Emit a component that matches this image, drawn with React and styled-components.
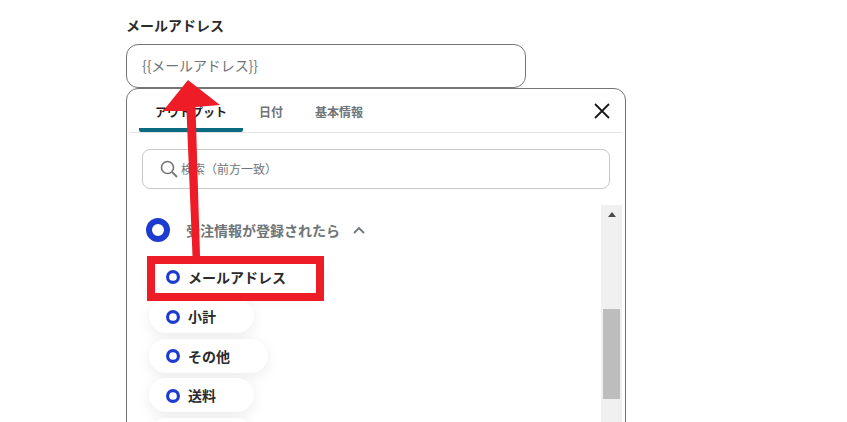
import styled, { createGlobalStyle } from "styled-components";

const GlobalStyle = createGlobalStyle`
  html, body {
    margin: 0;
    padding: 0;
    background: #ffffff;
    overflow: hidden;
  }
  * {
    box-sizing: border-box;
  }
`;

const FONT = `"Noto Sans CJK JP", "Noto Sans", sans-serif`;

const outputs = ["メールアドレス", "小計", "その他", "送料"];

function Ring({ size, stroke }) {
  return (
    <svg width={size} height={size} viewBox="0 0 24 24">
      <circle cx="12" cy="12" r={12 - stroke / 2} fill="none" stroke="#1e3bd0" strokeWidth={stroke} />
    </svg>
  );
}

function App() {
  return (
    <Page>
      <GlobalStyle />
      <Form>
        <Label>メールアドレス</Label>
        <Input>{"{{メールアドレス}}"}</Input>
        <Panel>
          <Tabs>
            <Tab $active>アウトプット</Tab>
            <Tab>日付</Tab>
            <Tab>基本情報</Tab>
            <Close>
              <svg width="16" height="16" viewBox="0 0 16 16">
                <path d="M1 1 L15 15 M15 1 L1 15" stroke="#1a1a1a" strokeWidth="1.8" fill="none" />
              </svg>
            </Close>
          </Tabs>
          <Search>
            <svg width="18" height="18" viewBox="0 0 18 18">
              <circle cx="7.5" cy="7.5" r="6" fill="none" stroke="#757575" strokeWidth="1.6" />
              <path d="M12 12 L17 17" stroke="#757575" strokeWidth="1.8" fill="none" />
            </svg>
            <span>検索（前方一致）</span>
          </Search>
          <Body>
            <List>
              <Group>
                <Ring size={24} stroke={6} />
                <GroupTitle>受注情報が登録されたら</GroupTitle>
                <svg width="12" height="8" viewBox="0 0 12 8">
                  <path d="M1 7 L6 2 L11 7" stroke="#6f7578" strokeWidth="1.8" fill="none" />
                </svg>
              </Group>
              {outputs.map((name) => (
                <Pill key={name}>
                  <Ring size={14} stroke={5.4} />
                  {name}
                </Pill>
              ))}
              <EmptyPill />
            </List>
            <Scrollbar>
              <ScrollArrow />
              <ScrollThumb />
            </Scrollbar>
          </Body>
        </Panel>
      </Form>
      <Highlight />
      <Arrow width="847" height="422" viewBox="0 0 847 422">
        <path d="M188 80 L220 105 L195.5 107 L200 256 L192.5 256 L186.5 111 L163 111 Z" fill="#ee1c27" />
      </Arrow>
    </Page>
  );
}

export default App;

const Page = styled.div`
  position: relative;
  width: 847px;
  height: 422px;
  overflow: hidden;
  font-family: ${FONT};
`;

const Form = styled.div`
  display: flex;
  flex-direction: column;
  width: 500px;
  margin-left: 126px;
  padding-top: 15px;
`;

const Label = styled.div`
  height: 29px;
  font-size: 14px;
  line-height: 20px;
  font-weight: 700;
  color: #2b2b2b;
`;

const Input = styled.div`
  display: flex;
  align-items: center;
  width: 400px;
  height: 44px;
  padding: 0 0 3px 15px;
  border: 1px solid #757575;
  border-radius: 12px;
  font-size: 14px;
  letter-spacing: -0.1px;
  color: #6f7578;
`;

const Panel = styled.div`
  display: flex;
  flex-direction: column;
  width: 500px;
  height: 400px;
  padding: 0 3px;
  border: 1px solid #757575;
  border-radius: 12px;
`;

const Tabs = styled.div`
  display: flex;
  align-items: stretch;
  flex: none;
  height: 44px;
  padding-left: 9px;
  border-bottom: 1px solid #e4e4e4;
`;

const Tab = styled.div`
  display: flex;
  align-items: center;
  justify-content: center;
  padding: 5px 16px 0;
  border-bottom: 4px solid ${(props) => (props.$active ? "#0b6a80" : "transparent")};
  border-radius: 2px;
  font-size: 12px;
  font-weight: 700;
  color: ${(props) => (props.$active ? "#1f1f1f" : "#6f7578")};
`;

const Close = styled.div`
  display: flex;
  align-items: center;
  margin-left: auto;
  padding-right: 12px;
`;

const Search = styled.div`
  display: flex;
  align-items: center;
  flex: none;
  gap: 3px;
  height: 40px;
  margin: 16px 12px 16px 12px;
  padding: 0 0 1px 17px;
  border: 1px solid #c8c8c8;
  border-radius: 8px;
  font-size: 12px;
  color: #6f7578;
`;

const Body = styled.div`
  display: flex;
  flex: 1;
  min-height: 0;
`;

const List = styled.div`
  display: flex;
  flex: 1;
  flex-direction: column;
  align-items: flex-start;
  gap: 5.5px;
  padding: 13px 0 0 19px;
`;

const Group = styled.div`
  display: flex;
  align-items: center;
  height: 23px;
  margin: 0 0 13px -3px;

  svg:first-child {
    margin-top: 1px;
  }
`;

const GroupTitle = styled.span`
  margin: 0 13px 0 16px;
  font-size: 14px;
  font-weight: 700;
  color: #6f7578;
`;

const Pill = styled.div`
  display: flex;
  align-items: center;
  flex: none;
  gap: 8px;
  height: 34px;
  padding: 0 38px 0 17px;
  border-radius: 17px;
  background: #ffffff;
  box-shadow: 0 4px 14px rgba(0, 0, 0, 0.08);
  font-size: 14px;
  line-height: 20px;
  font-weight: 700;
  color: #2b2b2b;

  svg {
    margin-top: 1px;
  }
`;

const EmptyPill = styled(Pill)`
  width: 105px;
`;

const Scrollbar = styled.div`
  display: flex;
  flex: none;
  flex-direction: column;
  align-items: center;
  width: 21px;
  background: #f0f0f0;
`;

const ScrollArrow = styled.div`
  width: 0;
  height: 0;
  margin-top: 7px;
  border-left: 4.5px solid transparent;
  border-right: 4.5px solid transparent;
  border-bottom: 5px solid #4a4a4a;
`;

const ScrollThumb = styled.div`
  width: 17px;
  height: 90px;
  margin-top: 92px;
  background: #bdbdbd;
`;

const Highlight = styled.div`
  position: absolute;
  left: 147px;
  top: 256px;
  width: 177px;
  height: 45px;
  border: 8px solid #ee1c27;
`;

const Arrow = styled.svg`
  position: absolute;
  left: 0;
  top: 0;
  pointer-events: none;
`;
